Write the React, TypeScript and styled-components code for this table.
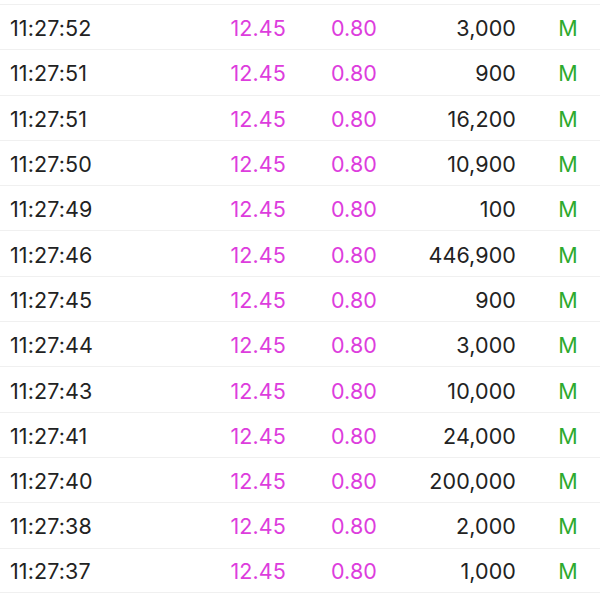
import React from "react";
import styled, { createGlobalStyle } from "styled-components";

const Global = createGlobalStyle`
  html, body { margin: 0; padding: 0; background: #ffffff; }
  body { font-family: Inter, "Liberation Sans", sans-serif; }
`;

const List = styled.div`
  padding-top: 4px;
  width: 600px;
`;

const Row = styled.div`
  box-sizing: border-box;
  height: 45.3px;
  border-top: 1px solid #f0f0f0;
  display: grid;
  grid-template-columns: 190px 86px 91px 139px 1fr;
  align-items: center;
  padding: 2px 0 0 10px;
  font-size: 21.5px;
  letter-spacing: 0.1px;
  &:last-child {
    border-bottom: 1px solid #f0f0f0;
  }
`;

const Time = styled.div`
  color: #222222;
`;

const Num = styled.div<{ $tone?: "accent" | "plain" }>`
  text-align: right;
  color: ${(p) => (p.$tone === "accent" ? "#dd3ddd" : "#222222")};
`;

const Type = styled.div`
  text-align: center;
  padding-left: 20px;
  color: #2eaa2e;
`;

const trades = [
  ["11:27:52", "3,000"],
  ["11:27:51", "900"],
  ["11:27:51", "16,200"],
  ["11:27:50", "10,900"],
  ["11:27:49", "100"],
  ["11:27:46", "446,900"],
  ["11:27:45", "900"],
  ["11:27:44", "3,000"],
  ["11:27:43", "10,000"],
  ["11:27:41", "24,000"],
  ["11:27:40", "200,000"],
  ["11:27:38", "2,000"],
  ["11:27:37", "1,000"],
];

export default function App() {
  return (
    <>
      <Global />
      <List>
        {trades.map(([t, v], i) => (
          <Row key={i}>
            <Time>{t}</Time>
            <Num $tone="accent">12.45</Num>
            <Num $tone="accent">0.80</Num>
            <Num>{v}</Num>
            <Type>M</Type>
          </Row>
        ))}
      </List>
    </>
  );
}
